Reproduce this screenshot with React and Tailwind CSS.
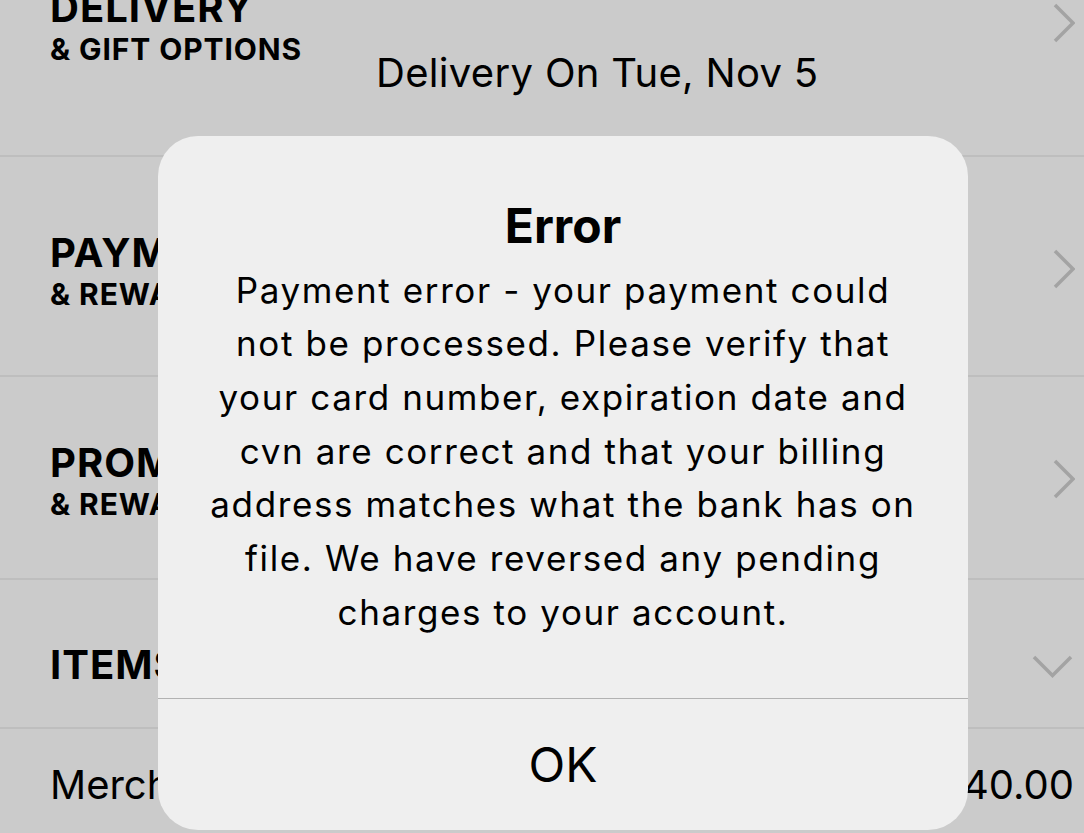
import React from "react";

function ChevronRight() {
  return (
    <svg width="22" height="40" viewBox="0 0 22 40" fill="none">
      <path d="M2 2 L20 20 L2 38" stroke="#a3a3a3" strokeWidth="3.5" />
    </svg>
  );
}

function ChevronDown() {
  return (
    <svg width="41" height="23" viewBox="0 0 41 23" fill="none">
      <path d="M2 2 L20.5 20.5 L39 2" stroke="#a3a3a3" strokeWidth="3.5" />
    </svg>
  );
}

function Sep() {
  return <div className="h-[2px] bg-[#bebebe]" />;
}

function Heading({ title, sub }) {
  return (
    <div>
      <div className="text-[40px] leading-[40px] font-bold tracking-[0.025em]">{title}</div>
      <div className="mt-[6.5px] text-[30px] leading-[30px] font-bold tracking-[0.03em]">{sub}</div>
    </div>
  );
}

const lines = [
  "Payment error - your payment could",
  "not be processed. Please verify that",
  "your card number, expiration date and",
  "cvn are correct and that your billing",
  "address matches what the bank has on",
  "file. We have reversed any pending",
  "charges to your account.",
];

export default function App() {
  return (
    <div className="relative w-[1084px] h-[833px] overflow-hidden bg-[#cbcbcb] text-black font-['Inter','Noto_Sans',sans-serif]">
      <div className="-mt-[20px]">
        {/* Row 1 */}
        <div className="h-[175px] flex">
          <div className="w-[376px] pl-[50px] pt-[7.5px] shrink-0">
            <Heading title="DELIVERY" sub="& GIFT OPTIONS" />
          </div>
          <div className="flex-1 pt-[72.5px] text-[40px] leading-[40px] tracking-[0.008em] whitespace-nowrap">
            Delivery On Tue, Nov 5
          </div>
          <div className="pr-[9px] pt-[23px]">
            <ChevronRight />
          </div>
        </div>
        <Sep />
        {/* Row 2 */}
        <div className="h-[218px] flex justify-between pl-[50px] pr-[9px]">
          <div className="pt-[75.5px]">
            <Heading title="PAYMENT" sub="& REWARDS" />
          </div>
          <div className="pt-[92px]">
            <ChevronRight />
          </div>
        </div>
        <Sep />
        {/* Row 3 */}
        <div className="h-[201px] flex justify-between pl-[50px] pr-[9px]">
          <div className="pt-[65.5px]">
            <Heading title="PROMO" sub="& REWARDS" />
          </div>
          <div className="pt-[82px]">
            <ChevronRight />
          </div>
        </div>
        <Sep />
        {/* Row 4 */}
        <div className="h-[147px] flex justify-between pl-[50px] pr-[11px]">
          <div className="pt-[65px] text-[40px] leading-[40px] font-bold tracking-[0.025em]">ITEMS</div>
          <div className="pt-[75px]">
            <ChevronDown />
          </div>
        </div>
        <Sep />
        {/* Row 5 */}
        <div className="flex justify-between pl-[50px] pr-[10px] pt-[36px] text-[40px] leading-[40px]">
          <div>Merchandise</div>
          <div>$140.00</div>
        </div>
      </div>

      {/* Alert */}
      <div className="absolute left-[158px] top-[136px] w-[810px] h-[694px] rounded-[40px] bg-[#efefef] flex flex-col overflow-hidden">
        <div className="h-[562px] pt-[60.5px] text-center">
          <div className="text-[48px] leading-[58px] font-bold">Error</div>
          <div className="mt-[9px] text-[35px] leading-[53.7px] tracking-[0.046em]">
            {lines.map((l, i) => (
              <div key={i} className="whitespace-nowrap">{l}</div>
            ))}
          </div>
        </div>
        <div className="h-px bg-[#b2b2b2]" />
        <div className="flex-1 flex items-center justify-center text-[48px] leading-[48px]">OK</div>
      </div>
    </div>
  );
}
